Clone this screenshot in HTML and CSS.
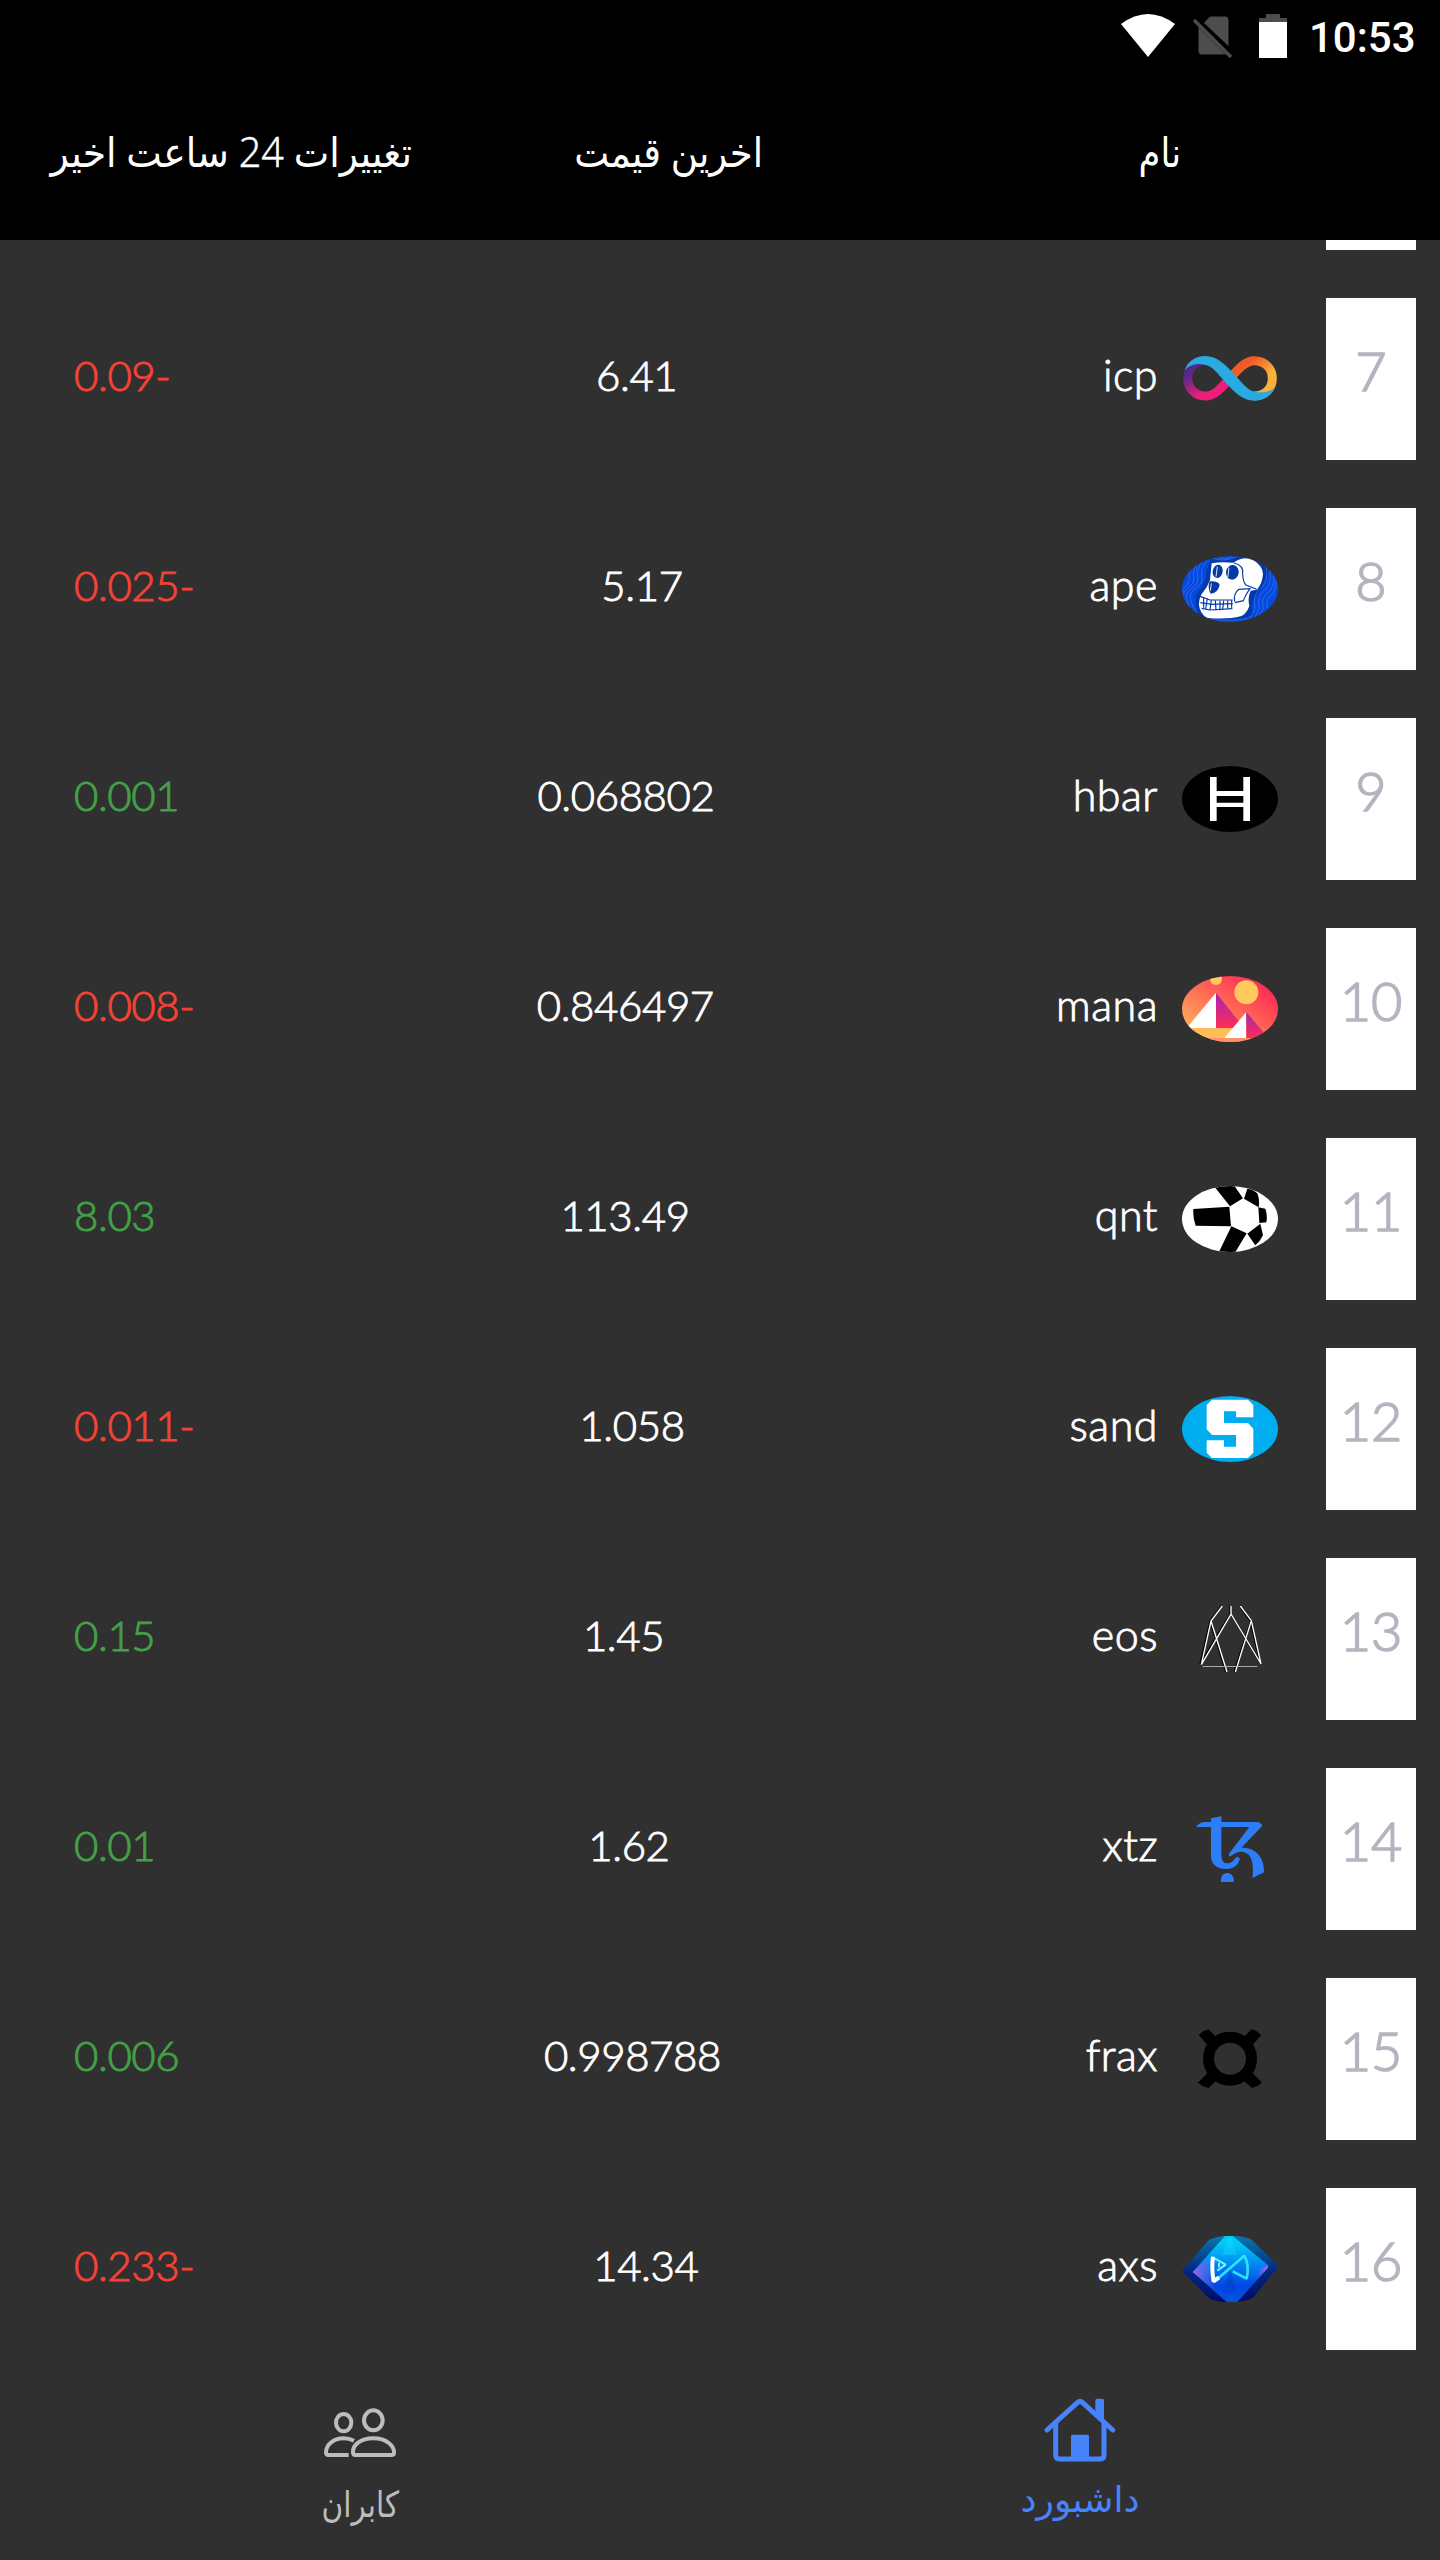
FILE: index.html
```html
<!DOCTYPE html>
<html lang="fa" dir="rtl">
<head>
<meta charset="utf-8">
<title>داشبورد</title>
<link rel="stylesheet" href="styles.css">
</head>
<body>
<div class="status" dir="ltr">
  <svg class="wifi" viewBox="0 0 54 44"><path d="M0 10Q27-10 54 10L27 43Z" fill="#fff"/></svg>
  <svg class="sim" viewBox="0 0 40 46"><path d="M11 9 17 2.500H32Q35.500 2.500 35.500 6V32ZM5.500 13 33 40.500H9Q5.500 40.500 5.500 37Z" fill="#4d4d4d"/><path d="M1 6 38 43" stroke="#4d4d4d" stroke-width="3.400"/></svg>
  <svg class="battery" viewBox="0 0 28 44"><path d="M7 0H21V4H28V9H0V4H7Z" fill="#4d4d4d"/><path d="M0 8H28V44H0Z" fill="#fff"/></svg>
  <span class="clock">10:53</span>
</div>
<header class="head">
  <span class="h-name">نام</span>
  <span class="h-price">اخرین قیمت</span>
  <span class="h-change">تغییرات <span class="num">24</span> ساعت اخیر</span>
</header>
<main class="list">
  <div class="row cut"><span class="rank"></span></div>

  <div class="row"><span class="rank">7</span>
    <svg class="coin" viewBox="426 198 288 198">
      <defs>
        <linearGradient id="icpA" x1="0" y1="0" x2="1" y2="1"><stop offset=".25" stop-color="#f15a24"/><stop offset=".65" stop-color="#fbb03b"/></linearGradient>
        <linearGradient id="icpB" x1="0" y1="0" x2=".8" y2="1"><stop offset=".1" stop-color="#522785"/><stop offset=".25" stop-color="#5a2785"/><stop offset=".75" stop-color="#ed1e79"/></linearGradient>
      </defs>
      <g fill="none" stroke-width="27"><path d="M570 295C594 268 615 242 643 242C673 242 697 264 697 295C697 328 673 348 643 348" stroke="url(#icpA)"/><path d="M570 295C546 322 525 348 496 348C467 348 443 326 443 295C443 262 467 242 496 242" stroke="url(#icpB)"/></g>
      <path d="M434 272C442 245 466 228 496 228C531 228 556 254 580 280C606 308 624 333 645 335C672 341 698 333 706 318C697 345 673 362 643 362C608 362 584 336 560 311C533 281 518 257 494 254C470 248 445 256 434 272Z" fill="#29abe2"/>
    </svg>
    <span class="name">icp</span><span class="price">6.41</span><span class="change down">-0.09</span></div>

  <div class="row"><span class="rank">8</span>
    <svg class="coin" viewBox="426 828 288 198">
      <clipPath id="oval"><ellipse cx="570" cy="927" rx="144" ry="99"/></clipPath>
      <g clip-path="url(#oval)"><path d="M426 828H714V1026H426Z" fill="#054adf"/>
        <path d="M515 835Q545 848 572 836L620 828 690 855Q683 900 655 940Q628 965 638 1005L590 1020H500Q455 1000 470 940Q500 910 500 870Z" fill="#0639a8"/>
        <g fill="none" stroke="#5b8df0" stroke-width="2" opacity=".7"><path d="M503 838Q480 868 485 890T462 930T478 1010"/><path d="M490 838Q468 868 473 890T450 930T466 1010"/><path d="M478 845Q456 870 461 890T438 930T454 1000"/><path d="M463 855Q444 872 448 890T428 930T442 990"/><path d="M511 830Q548 850 588 831M535 830Q558 842 575 830"/><path d="M676 850Q688 890 668 920Q635 940 645 985L630 1015"/><path d="M688 860Q698 900 680 925Q648 945 658 985L642 1018"/><path d="M700 870Q708 905 690 933Q660 950 670 985L655 1010"/><path d="M710 885Q710 915 700 940Q675 955 682 985"/><path d="M500 1018Q555 1024 625 1016"/></g>
        <path d="M515 850Q540 844 580 848Q610 828 637 838Q670 860 669 883Q667 910 651 929L632 932Q622 955 628 977Q621 1001 602 1009Q565 1019 500 1014Q480 1000 477 975Q477 955 485 942Q503 921 510 900Z" fill="#fff"/>
        <g fill="#0639a8"><ellipse cx="533" cy="874" rx="15" ry="20" transform="rotate(12 533 874)"/><ellipse cx="577" cy="877" rx="19" ry="22" transform="rotate(10 577 877)"/><path d="M509 904Q536 903 539 915Q533 940 512 941Q501 923 509 904Z"/></g>
        <g fill="none" stroke="#0639a8" stroke-width="3.500"><path d="M582 849Q613 857 608 882Q609 907 618 915L650 928"/><path d="M584 965Q580 940 597 928L630 926Q617 943 610 962L585 968"/><path d="M480 949L510 960 578 960M481 968L515 973 578 971M485 985L510 990 577 986"/><path d="M491 951V983M502 955 497 987M514 960 510 990M526 961 528 991M540 962V991M551 962 548 989M563 961V986M575 960V985"/></g>
        <path d="M532 860 528 890M567 863 563 893M514 910 511 932" stroke="#dce7ff" stroke-width="3"/>
      </g>
    </svg>
    <span class="name">ape</span><span class="price">5.17</span><span class="change down">-0.025</span></div>

  <div class="row"><span class="rank">9</span>
    <svg class="coin" viewBox="426 198 288 198"><ellipse cx="570" cy="297" rx="144" ry="99"/><path d="M510 231H530V273H610V231H630V363H610V321H530V363H510ZM530 288V308H610V288Z" fill="#fff" fill-rule="evenodd"/></svg>
    <span class="name">hbar</span><span class="price">0.068802</span><span class="change up">0.001</span></div>

  <div class="row"><span class="rank">10</span>
    <svg class="coin" viewBox="426 828 288 198">
      <defs><linearGradient id="sky" x1="0" y1="1" x2="1" y2="0"><stop offset=".12" stop-color="#ffaf5c"/><stop offset=".5" stop-color="#ff6a55"/><stop offset=".85" stop-color="#ff2d55"/></linearGradient><linearGradient id="hill" x1="0" y1="0" x2="0" y2="1"><stop stop-color="#a524b3"/><stop offset="1" stop-color="#ff2d55"/></linearGradient></defs>
      <g clip-path="url(#oval)"><path d="M426 828H714V1026H426Z" fill="url(#sky)"/><path d="M426 984H600V1014H426Z" fill="#ffbc5b"/><path d="M426 1014H714V1026H426Z" fill="#ff9260"/><circle cx="619" cy="877" r="36" fill="#ffc95b"/><circle cx="528" cy="837" r="18" fill="#ffc95b"/><path d="M528 878V984H440Z" fill="#fff"/><path d="M528 878 613 984H528Z" fill="url(#hill)"/><path d="M619 936V1014H553Z" fill="#fff"/><path d="M619 936 685 1014H619Z" fill="url(#hill)"/></g>
    </svg>
    <span class="name">mana</span><span class="price">0.846497</span><span class="change down">-0.008</span></div>

  <div class="row"><span class="rank">11</span>
    <svg class="coin" viewBox="426 198 288 198"><clipPath id="ball"><ellipse cx="570" cy="297" rx="144" ry="99"/></clipPath><g clip-path="url(#ball)"><path d="M426 198H714V396H426Z" fill="#fff"/><path d="M520 196H582L609 235 570 259ZM622 206Q640 208 652 220Q660 240 656 262L612 236ZM460 267 568 260 573 319 467 317Q458 292 460 267ZM655 262 676 266Q683 285 679 307L658 309ZM574 319 620 340 585 398H536ZM661 311 669 346Q660 365 646 376L622 341Z"/></g></svg>
    <span class="name">qnt</span><span class="price">113.49</span><span class="change up">8.03</span></div>

  <div class="row"><span class="rank">12</span>
    <svg class="coin" viewBox="426 828 288 198"><ellipse cx="570" cy="927" rx="144" ry="99" fill="#00adef"/><path d="M516 839H624L640 855V892H588V874H552V909H624L640 926V998L624 1014H516L500 998V961H552V980H588V945H516L500 928V855Z" fill="#fff"/></svg>
    <span class="name">sand</span><span class="price">1.058</span><span class="change down">-0.011</span></div>

  <div class="row"><span class="rank">13</span>
    <svg class="coin" viewBox="426 198 288 198"><g fill="none" stroke-width="4"><path d="M544 198 510 243 480 372M570 198V222L481 371M511 246 557 396M602 203 630 243 660 370M575 226 660 370M631 246 582 396" stroke="#000"/><path d="M547 198 513 243 484 374M573 198V222L484 374M513 243 561 396M601 198 634 242 663 372M573 222 663 372M634 242 586 396" stroke="#fff"/><path d="M488 379.500H652" stroke="#aaa" stroke-width="3"/></g></svg>
    <span class="name">eos</span><span class="price">1.45</span><span class="change up">0.15</span></div>

  <div class="row"><span class="rank">14</span>
    <svg class="coin" viewBox="426 828 288 198"><path d="M513 835 544 829V846H652Q664 849 667 857L604 923C648 922 674 954 672 997L638 1014C641 973 638 938 605 935C588 935 581 943 568 950L566 943 628 861H544V947Q546 970 561 970C580 970 582 955 591 950L600 955C596 974 583 987 559 987C530 987 513 973 513 948V861H469Q473 851 490 846H513ZM543 1026V1018C545 993 579 993 581 1018V1026Z" fill="#2c7df7"/></svg>
    <span class="name">xtz</span><span class="price">1.62</span><span class="change up">0.01</span></div>

  <div class="row"><span class="rank">15</span>
    <svg class="coin" viewBox="426 198 288 198"><circle cx="570" cy="296" r="64.500" fill="none" stroke="#000" stroke-width="33"/><path d="M476 225Q488 212 505 208L528 230 500 253ZM635 208Q652 212 664 225L640 253 612 230ZM474 368 502 339 528 363 505 384Q487 380 474 368ZM638 339 666 368Q653 380 636 384L612 363Z"/></svg>
    <span class="name">frax</span><span class="price">0.998788</span><span class="change up">0.006</span></div>

  <div class="row"><span class="rank">16</span>
    <svg class="coin" viewBox="426 828 288 198">
      <defs><linearGradient id="rim" x1="0" y1="0" x2="0" y2="1"><stop stop-color="#0878ae"/><stop offset=".5" stop-color="#022b83"/><stop offset="1" stop-color="#000b69"/></linearGradient><linearGradient id="gem" x1="0" y1="0" x2="0" y2="1"><stop offset=".1" stop-color="#00cdf5"/><stop offset=".45" stop-color="#0083f2"/><stop offset=".75" stop-color="#0048e2"/><stop offset="1" stop-color="#0056dd"/></linearGradient><linearGradient id="edgeL" x1="0" y1="0" x2="1" y2="0"><stop offset=".1" stop-color="#9462ec"/><stop offset="1" stop-color="#5a64ec" stop-opacity="0"/></linearGradient><linearGradient id="edgeR" x1="1" y1="0" x2="0" y2="0"><stop offset=".2" stop-color="#9462ec"/><stop offset="1" stop-color="#5a64ec" stop-opacity=".1"/></linearGradient></defs>
      <path d="M426 934 506 841Q517 833 548 828H592Q625 832 636 840L710 913Q714 920 710 926L638 1014Q625 1022 592 1026H548Q520 1022 509 1016Z" fill="url(#rim)"/><path d="M555 828H578L683 914Q686 919 683 924L592 1026H560L458 936Z" fill="url(#gem)"/><path d="M458 936 505 892 530 998Z" fill="url(#edgeL)"/><path d="M684 916 650 930V960L684 923Z" fill="url(#edgeR)"/><path d="M570 828 545 885H592Z" fill="#13dafa" opacity=".4"/><path d="M570 925 548 998H590Z" fill="#003dcc" opacity=".5"/>
      <g fill="none" stroke-linejoin="bevel"><path d="M532 957 613 887Q629 915 620 956L578 934" stroke="#2fe2fb" stroke-width="8"/><path d="M518 892 557 914 532 932M537 908V922" stroke="#7ff0ff" stroke-width="6"/><path d="M519 890Q514 925 521 964L537 952" stroke="#fff" stroke-width="12"/></g>
    </svg>
    <span class="name">axs</span><span class="price">14.34</span><span class="change down">-0.233</span></div>
</main>
<nav class="nav">
  <a class="tab active">
    <svg class="home" viewBox="195 175 216 192"><g fill="none" stroke="#4784fc" stroke-width="15" stroke-linecap="round" stroke-linejoin="round"><path d="M204 271 296 188Q303 182 310 188L401 271"/><path stroke-linecap="butt" d="M230 246V346Q230 358 242 358H363Q375 358 375 346V246"/></g><path d="M349 215V182Q349 177 354 177H370Q375 177 375 182V243ZM276 358V290Q276 285 281 285H325Q330 285 330 290V358Z" fill="#4784fc"/></svg>
    <span class="lab-home">داشبورد</span>
  </a>
  <a class="tab">
    <svg class="users" viewBox="132 203 216 150"><g fill="none" stroke="#bdbdbd" stroke-width="12"><ellipse cx="191" cy="247" rx="23" ry="26"/><ellipse cx="280" cy="240" rx="28" ry="30"/><path d="M219 336C218 315 240 294 280 294C320 294 343 317 342 337Q342 344 334 344H226Q219 344 219 336Z"/><path d="M206 344H145Q138 344 138 336C138 315 158 294 191 294Q208 294 222 301"/></g></svg>
    <span class="lab-users">کابران</span>
  </a>
</nav>
</body>
</html>
```
FILE: styles.css
```css
* { box-sizing: border-box; }
body {
  margin: 0;
  width: 1440px;
  height: 2560px;
  overflow: hidden;
  display: flex;
  flex-direction: column;
  background: #303030;
  color: #fff;
  font-family: Lato, "Noto Sans", "DejaVu Sans", sans-serif;
}
svg { display: block; flex: none; }
.status {
  height: 72px;
  background: #000;
  display: flex;
  justify-content: flex-end;
  align-items: flex-start;
  padding: 14px 24px 0 0;
}
.wifi { width: 54px; height: 44px; }
.sim { width: 40px; height: 46px; margin-left: 18px; }
.battery { width: 28px; height: 44px; margin-left: 26px; }
.clock {
  width: 107px;
  margin-left: 22px;
  font: 500 42px/47px Roboto, sans-serif;
  white-space: nowrap;
}
.head {
  height: 168px;
  background: #000;
  display: flex;
  padding: 49px 259px 0 48px;
  font: 41px/60px "Noto Sans", "DejaVu Sans", sans-serif;
  white-space: nowrap;
}
.head > span { transform-origin: right center; }
.h-name { width: 42px; transform: scaleX(.86); }
.h-price { margin-right: 376px; width: 187px; transform: scaleX(.905); }
.h-change { margin-right: 164px; width: 362px; transform: scaleX(.92); }
.num { font-size: 43px; font-weight: 300; line-height: 1; -webkit-text-stroke: .4px; }
.list {
  display: flex;
  flex-direction: column;
  gap: 48px;
  height: 2128px;
}
.row {
  height: 162px;
  display: flex;
  align-items: center;
  padding: 0 24px 0 74px;
  font-size: 42px;
  font-weight: 300;
  line-height: 50px;
  -webkit-text-stroke: .9px currentColor;
}
.cut { height: 10px; }
.rank {
  width: 90px;
  height: 100%;
  background: #fff;
  color: #b3b5bf;
  display: flex;
  align-items: center;
  justify-content: center;
  padding: 0 0 16px 0;
  font-size: 54px;
  -webkit-text-stroke-width: 1.6px;
}
.cut .rank { padding: 0; }
.coin { width: 96px; height: 66px; margin: 0 48px 0 24px; }
.name, .price, .change { padding-bottom: 9px; }
.name { font-size: 43px; letter-spacing: .5px; }
.price { margin: 0 auto; }
.price, .change { letter-spacing: -.4px; }
.down { color: #f44336; }
.up { color: #43a047; }
.nav {
  height: 192px;
  display: flex;
  font: 36px/50px "Noto Sans", "DejaVu Sans", sans-serif;
  white-space: nowrap;
}
.tab {
  width: 50%;
  display: flex;
  flex-direction: column;
  align-items: center;
  color: #bdbdbd;
}
.active { color: #4784fc; }
.home { width: 72px; height: 64px; margin-top: 30px; }
.users { width: 72px; height: 50px; margin-top: 40px; }
.lab-home { margin-top: 12px; }
.lab-users { margin-top: 21px; transform: scaleX(.82); }
```
